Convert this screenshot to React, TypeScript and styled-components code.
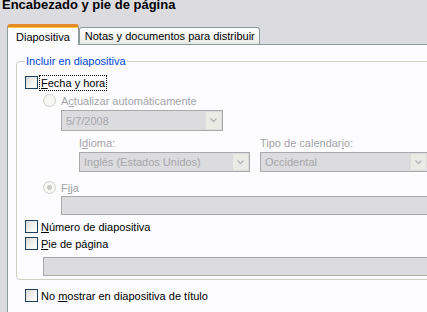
import React from 'react';
import styled, { createGlobalStyle } from 'styled-components';

const GlobalStyle = createGlobalStyle`
  html, body {
    margin: 0;
    padding: 0;
    overflow: hidden;
  }
  body {
    font-family: "Liberation Sans", Arial, sans-serif;
    font-size: 11px;
    color: #000;
  }
`;

const Window = styled.div`
  width: 427px;
  height: 312px;
  overflow: hidden;
  background: #dcdce0;
`;

const Title = styled.div`
  margin-top: -3px;
  height: 27px;
  padding-left: 2px;
  font-size: 13px;
  font-weight: bold;
  line-height: 16px;
  white-space: nowrap;
`;

const TabStrip = styled.div`
  display: flex;
  align-items: flex-end;
  height: 20px;
  padding-left: 7px;
`;

const Tab = styled.div<{ $active?: boolean }>`
  box-sizing: border-box;
  position: relative;
  z-index: ${(p) => (p.$active ? 1 : 0)};
  height: ${(p) => (p.$active ? '21px' : '17px')};
  margin-bottom: ${(p) => (p.$active ? '-1px' : '0')};
  padding: ${(p) => (p.$active ? '3px 8px 0' : '1px 4px 0 5px')};
  border: 1px solid #919b9c;
  border-bottom: none;
  border-top: ${(p) => (p.$active ? '3px solid #e68b2c' : '1px solid #919b9c')};
  border-radius: 3px 3px 0 0;
  background: ${(p) =>
    p.$active ? '#fcfcfe' : 'linear-gradient(#ffffff, #f3f3f0 70%, #e6e6e2)'};
  line-height: 14px;
  white-space: nowrap;
  box-shadow: ${(p) => (p.$active ? 'inset 0 1px 0 #ffc73c' : 'none')};
`;

const Panel = styled.div`
  box-sizing: border-box;
  width: 460px;
  height: 300px;
  margin-left: 7px;
  padding: 10px 0 0 8px;
  border: 1px solid #919b9c;
  background: #fcfcfe;
`;

const Group = styled.fieldset`
  margin: 0;
  padding: 0 0 3px 8px;
  border: 1px solid #d0d0bf;
  border-radius: 4px;
  min-inline-size: 0;
`;

const Legend = styled.legend`
  padding: 0 1px;
  color: #0046d5;
  line-height: 13px;
`;

const Row = styled.div<{ $indent?: number; $top?: number }>`
  display: flex;
  align-items: center;
  gap: 1px;
  height: 13px;
  margin-left: ${(p) => p.$indent ?? 0}px;
  margin-top: ${(p) => p.$top ?? 0}px;
  white-space: nowrap;
`;

const CheckBox = styled.span`
  box-sizing: border-box;
  flex: none;
  width: 13px;
  height: 13px;
  border: 1px solid #1c3f5e;
  background: linear-gradient(135deg, #d8d8d4, #f4f4f2 60%, #ffffff);
`;

const Radio = styled.span<{ $checked?: boolean }>`
  box-sizing: border-box;
  flex: none;
  display: flex;
  align-items: center;
  justify-content: center;
  width: 13px;
  height: 13px;
  margin-right: 2px;
  border: 1px solid #cfcfc6;
  border-radius: 50%;
  background: #f6f6f4;

  &::after {
    content: '';
    display: ${(p) => (p.$checked ? 'block' : 'none')};
    width: 5px;
    height: 5px;
    border-radius: 50%;
    background: #c8c8c0;
  }
`;

const Label = styled.span<{ $disabled?: boolean; $focus?: boolean }>`
  padding: 0 1px;
  border: 1px dotted ${(p) => (p.$focus ? '#000' : 'transparent')};
  line-height: 14px;
  color: ${(p) => (p.$disabled ? '#a4a4a8' : '#000')};
`;

const Key = styled.span`
  text-decoration: underline;
  text-underline-offset: 1px;
`;

const Field = styled.div<{ $width: number; $height: number; $indent?: number; $top?: number }>`
  box-sizing: border-box;
  position: relative;
  display: flex;
  align-items: center;
  width: ${(p) => p.$width}px;
  height: ${(p) => p.$height}px;
  margin-left: ${(p) => p.$indent ?? 0}px;
  margin-top: ${(p) => p.$top ?? 0}px;
  padding-left: 4px;
  border: 1px solid #a9a9ad;
  background: #dcdcdf;
  color: #a6a6aa;
  white-space: nowrap;
`;

const DropButton = styled.span`
  box-sizing: border-box;
  position: absolute;
  top: 1px;
  right: 1px;
  bottom: 1px;
  width: 15px;
  display: flex;
  align-items: center;
  justify-content: center;
  background: #ebebe6;
`;

const LangGrid = styled.div`
  display: grid;
  grid-template-columns: 171px 168px;
  grid-template-rows: 13px 20px;
  column-gap: 10px;
  row-gap: 2px;
  margin: 6px 0 0 54px;
  line-height: 13px;
`;

const GridLabel = styled.span`
  color: #a4a4a8;
  white-space: nowrap;
`;

const Chevron = () => (
  <svg width="7" height="5" viewBox="0 0 7 5">
    <path d="M0.5 0.5 L3.5 3.5 L6.5 0.5" fill="none" stroke="#b4b4b8" strokeWidth="1.3" />
  </svg>
);

const Select: React.FC<{ value: string; width: number; height: number; indent?: number; top?: number }> = ({
  value,
  width,
  height,
  indent,
  top,
}) => (
  <Field $width={width} $height={height} $indent={indent} $top={top}>
    {value}
    <DropButton>
      <Chevron />
    </DropButton>
  </Field>
);

export default function App() {
  return (
    <Window>
      <GlobalStyle />
      <Title>Encabezado y pie de página</Title>
      <TabStrip>
        <Tab $active>Diapositiva</Tab>
        <Tab>Notas y documentos para distribuir</Tab>
      </TabStrip>
      <Panel>
        <Group>
          <Legend>Incluir en diapositiva</Legend>
          <Row $top={8}>
            <CheckBox />
            <Label $focus>
              <Key>F</Key>echa y hora
            </Label>
          </Row>
          <Row $indent={18} $top={5}>
            <Radio />
            <Label $disabled>
              A<Key>c</Key>tualizar automáticamente
            </Label>
          </Row>
          <Select value="5/7/2008" width={162} height={21} indent={36} top={3} />
          <LangGrid>
            <GridLabel>
              I<Key>d</Key>ioma:
            </GridLabel>
            <GridLabel>
              Tipo de calendar<Key>i</Key>o:
            </GridLabel>
            <Select value="Inglés (Estados Unidos)" width={171} height={20} />
            <Select value="Occidental" width={168} height={20} />
          </LangGrid>
          <Row $indent={18} $top={9}>
            <Radio $checked />
            <Label $disabled>
              F<Key>i</Key>ja
            </Label>
          </Row>
          <Field $width={400} $height={19} $indent={36} $top={2} />
          <Row $top={5}>
            <CheckBox />
            <Label>
              <Key>N</Key>úmero de diapositiva
            </Label>
          </Row>
          <Row $top={4}>
            <CheckBox />
            <Label>
              <Key>P</Key>ie de página
            </Label>
          </Row>
          <Field $width={420} $height={19} $indent={18} $top={7} />
        </Group>
        <Row $indent={9} $top={9}>
          <CheckBox />
          <Label>
            No <Key>m</Key>ostrar en diapositiva de título
          </Label>
        </Row>
      </Panel>
    </Window>
  );
}
